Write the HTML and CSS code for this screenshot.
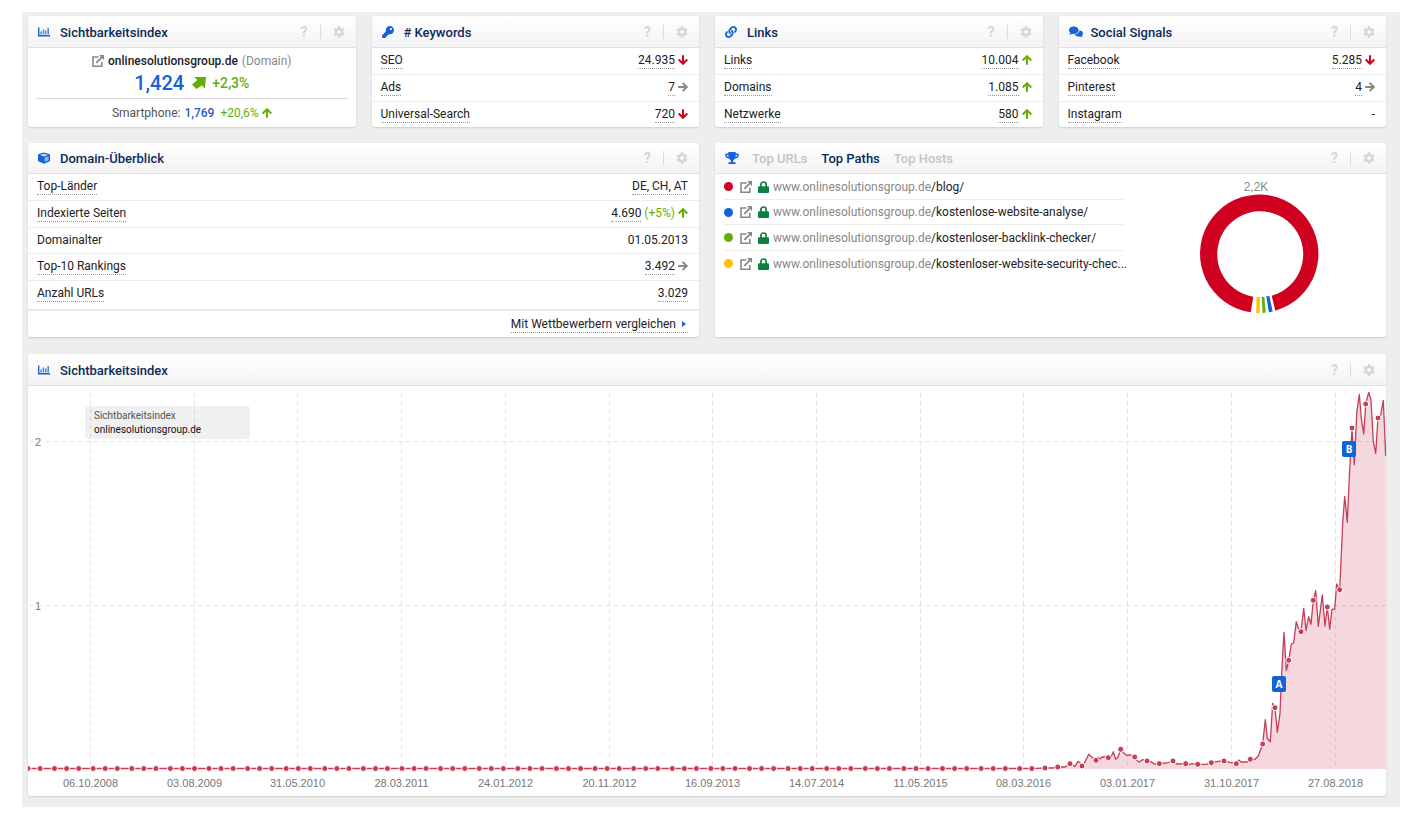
FILE: index.html
```html
<!DOCTYPE html>
<html lang="de">
<head>
<meta charset="utf-8">
<title>Sichtbarkeitsindex – onlinesolutionsgroup.de</title>
<link rel="stylesheet" href="styles.css">
</head>
<body>
<svg class="sprite" aria-hidden="true">
  <symbol id="i-chart" viewBox="0 0 12 10"><path d="M.7.5V8.800H12" fill="none" stroke="currentColor" stroke-width="1.4"/><path d="M2.300 7.500V4.500h1.500v3zM4.700 7.500V2.500h1.500v5zM7 7.500V3.500h1.500v4zM9.400 7.500V1H11v6.500z" opacity=".75"/></symbol>
  <symbol id="i-key" viewBox="0 0 512 512"><path d="M512 176.001C512 273.203 433.202 352 336 352c-11.220 0-22.190-1.062-32.827-3.069l-24.012 27.014A23.999 23.999 0 0 1 261.223 384H224v40c0 13.255-10.745 24-24 24h-40v40c0 13.255-10.745 24-24 24H24c-13.255 0-24-10.745-24-24v-78.059c0-6.365 2.529-12.470 7.029-16.971l161.802-161.802C163.108 213.814 160 195.271 160 176 160 78.798 238.797.001 335.999 0 433.488-.001 512 78.511 512 176.001zM336 128c0 26.510 21.490 48 48 48s48-21.490 48-48-21.490-48-48-48-48 21.490-48 48z"/></symbol>
  <symbol id="i-link" viewBox="0 0 512 512"><path d="M326.612 185.391c59.747 59.809 58.927 155.698.36 214.590-.11.12-.24.25-.36.37l-67.200 67.200c-59.270 59.270-155.699 59.262-214.960 0-59.270-59.260-59.270-155.700 0-214.960l37.106-37.106c9.840-9.840 26.786-3.300 27.294 10.606.648 17.722 3.826 35.527 9.690 52.721 1.986 5.822.567 12.262-3.783 16.612l-13.087 13.087c-28.026 28.026-28.905 73.660-1.155 101.960 28.024 28.579 74.086 28.749 102.325.51l67.200-67.190c28.191-28.191 28.073-73.757 0-101.830-3.701-3.694-7.429-6.564-10.341-8.569a16.037 16.037 0 0 1-6.947-12.606c-.396-10.567 3.348-21.456 11.698-29.806l21.054-21.055c5.521-5.521 14.182-6.199 20.584-1.731a152.482 152.482 0 0 1 20.522 17.197zM467.547 44.449c-59.261-59.262-155.690-59.270-214.960 0l-67.200 67.200c-.12.12-.25.25-.36.37-58.566 58.892-59.387 154.781.36 214.590a152.454 152.454 0 0 0 20.521 17.196c6.402 4.468 15.064 3.789 20.584-1.731l21.054-21.055c8.350-8.350 12.094-19.239 11.698-29.806a16.037 16.037 0 0 0-6.947-12.606c-2.912-2.005-6.640-4.875-10.341-8.569-28.073-28.073-28.191-73.639 0-101.830l67.200-67.190c28.239-28.239 74.300-28.069 102.325.51 27.750 28.300 26.872 73.934-1.155 101.960l-13.087 13.087c-4.350 4.350-5.769 10.790-3.783 16.612 5.864 17.194 9.042 34.999 9.690 52.721.509 13.906 17.454 20.446 27.294 10.606l37.106-37.106c59.271-59.259 59.271-155.699.001-214.959z"/></symbol>
  <symbol id="i-comments" viewBox="0 0 14 12"><path d="M4.800.5C7.500.5 9.600 2.100 9.600 4.200S7.500 7.900 4.800 7.900c-.6 0-1.100-.1-1.600-.2C2.400 8.300 1.400 8.700.2 8.700c.5-.5 1-1.200 1.200-1.900C.5 6.100 0 5.200 0 4.200 0 2.100 2.100.5 4.800.5z"/><path d="M10.500 4.300c2 .3 3.500 1.600 3.500 3.200 0 .8-.4 1.600-1.100 2.200.2.600.6 1.100 1 1.500-1 0-1.900-.3-2.600-.8-.4.1-.8.2-1.300.2-1.900 0-3.500-.9-4.200-2.100 2.700-.2 4.700-2 4.700-4.200z"/></symbol>
  <symbol id="i-cube" viewBox="0 0 12 12"><path d="M6 .4l5.200 1.500q.8.300.8 1.100v5.600q0 .7-.7 1L6 11.800.700 9.600q-.7-.3-.7-1V3q0-.8.8-1.100z"/><path d="M2 3l4-1.300L10 3 6 4.400z" fill="#fff" opacity=".8"/><path d="M6.700 5.600l3.900-1.400v4l-3.900 1.900z" fill="#fff" opacity=".55"/></symbol>
  <symbol id="i-trophy" viewBox="0 0 576 512"><path d="M552 64H448V24c0-13.300-10.700-24-24-24H152c-13.300 0-24 10.700-24 24v40H24C10.700 64 0 74.700 0 88v56c0 35.700 22.500 72.400 61.900 100.700 31.500 22.700 69.800 37.100 110 41.700C203.300 338.500 240 360 240 360v72h-48c-35.300 0-64 20.700-64 56v12c0 6.600 5.400 12 12 12h296c6.600 0 12-5.400 12-12v-12c0-35.300-28.700-56-64-56h-48v-72s36.700-21.500 68.100-73.600c40.300-4.600 78.600-19 110-41.700 39.300-28.300 61.900-65 61.900-100.700V88c0-13.300-10.700-24-24-24zM99.300 192.800C74.900 175.200 64 155.600 64 144v-16h64.200c1 32.600 5.800 61.200 12.800 86.200-15.100-5.200-29.200-12.400-41.700-21.400zM512 144c0 16.100-17.700 36.100-35.300 48.800-12.500 9-26.700 16.200-41.800 21.400 7-25 11.800-53.600 12.800-86.200H512v16z"/></symbol>
  <symbol id="i-gear" viewBox="0 0 12 12"><circle cx="6" cy="6" r="3.100" fill="none" stroke="currentColor" stroke-width="2.300"/><path d="M6 .3v2M6 9.700v2M1.060 3.150l1.750 1M9.200 7.850l1.750 1M1.060 8.850l1.750-1M9.200 4.150l1.750-1" stroke="currentColor" stroke-width="2.700"/></symbol>
  <symbol id="i-up" viewBox="0 0 10 10"><path d="M5 9.800V1.500M.7 5.500L5 1.200l4.300 4.300" fill="none" stroke="currentColor" stroke-width="2"/></symbol>
  <symbol id="i-down" viewBox="0 0 10 10"><path d="M5 .2v8.300M.7 4.500L5 8.800l4.300-4.300" fill="none" stroke="currentColor" stroke-width="2"/></symbol>
  <symbol id="i-right" viewBox="0 0 10 10"><path d="M.1 5h8.500M4.600.8L8.800 5 4.600 9.200" fill="none" stroke="currentColor" stroke-width="1.900"/></symbol>
  <symbol id="i-rise" viewBox="0 0 14 12"><path d="M2.300 0H14l-1.100 11.400-3-2.800L4.300 12 0 7.500l5.300-4.400z"/></symbol>
  <symbol id="i-ext" viewBox="0 0 12 12"><path d="M6.500 2H1v9.200h8.800V7" fill="none" stroke="currentColor" stroke-width="1.600"/><path d="M4.300 7.800L10 2.100" stroke="currentColor" stroke-width="1.800"/><path d="M7 0h5v5z"/></symbol>
  <symbol id="i-lock" viewBox="0 0 11 12"><path d="M2.900 6V3.600a2.600 2.600 0 0 1 5.200 0V6" fill="none" stroke="currentColor" stroke-width="1.700"/><rect y="5.200" width="11" height="6.800" rx="1"/></symbol>
</svg>

<main class="dashboard">
  <section class="card">
    <header class="card-head">
      <svg class="head-icon"><use href="#i-chart"/></svg><h2>Sichtbarkeitsindex</h2>
      <div class="tools"><button type="button" aria-label="Hilfe">?</button><button type="button" class="gear" aria-label="Einstellungen"><svg><use href="#i-gear"/></svg></button></div>
    </header>
    <div class="summary">
      <p class="domain"><svg class="ext"><use href="#i-ext"/></svg><strong>onlinesolutionsgroup.de</strong><span>(Domain)</span></p>
      <p class="score"><strong>1,424</strong><svg><use href="#i-rise"/></svg><span>+2,3%</span></p>
      <p class="mobile"><span>Smartphone:</span><strong>1,769</strong><span class="green plus">+20,6%</span><svg class="trend green"><use href="#i-up"/></svg></p>
    </div>
  </section>

  <section class="card">
    <header class="card-head">
      <svg class="head-icon"><use href="#i-key"/></svg><h2># Keywords</h2>
      <div class="tools"><button type="button" aria-label="Hilfe">?</button><button type="button" class="gear" aria-label="Einstellungen"><svg><use href="#i-gear"/></svg></button></div>
    </header>
    <table class="stats">
      <tr><th scope="row"><span class="dotted">SEO</span></th><td><span class="dotted">24.935</span><svg class="trend red"><use href="#i-down"/></svg></td></tr>
      <tr><th scope="row"><span class="dotted">Ads</span></th><td><span class="dotted">7</span><svg class="trend grey"><use href="#i-right"/></svg></td></tr>
      <tr><th scope="row"><span class="dotted">Universal-Search</span></th><td><span class="dotted">720</span><svg class="trend red"><use href="#i-down"/></svg></td></tr>
    </table>
  </section>

  <section class="card">
    <header class="card-head">
      <svg class="head-icon"><use href="#i-link"/></svg><h2>Links</h2>
      <div class="tools"><button type="button" aria-label="Hilfe">?</button><button type="button" class="gear" aria-label="Einstellungen"><svg><use href="#i-gear"/></svg></button></div>
    </header>
    <table class="stats">
      <tr><th scope="row"><span class="dotted">Links</span></th><td><span class="dotted">10.004</span><svg class="trend green"><use href="#i-up"/></svg></td></tr>
      <tr><th scope="row"><span class="dotted">Domains</span></th><td><span class="dotted">1.085</span><svg class="trend green"><use href="#i-up"/></svg></td></tr>
      <tr><th scope="row"><span class="dotted">Netzwerke</span></th><td><span class="dotted">580</span><svg class="trend green"><use href="#i-up"/></svg></td></tr>
    </table>
  </section>

  <section class="card">
    <header class="card-head">
      <svg class="head-icon wide"><use href="#i-comments"/></svg><h2>Social Signals</h2>
      <div class="tools"><button type="button" aria-label="Hilfe">?</button><button type="button" class="gear" aria-label="Einstellungen"><svg><use href="#i-gear"/></svg></button></div>
    </header>
    <table class="stats">
      <tr><th scope="row"><span class="dotted">Facebook</span></th><td><span class="dotted">5.285</span><svg class="trend red"><use href="#i-down"/></svg></td></tr>
      <tr><th scope="row"><span class="dotted">Pinterest</span></th><td><span class="dotted">4</span><svg class="trend grey"><use href="#i-right"/></svg></td></tr>
      <tr><th scope="row"><span class="dotted">Instagram</span></th><td>-</td></tr>
    </table>
  </section>

  <section class="card half">
    <header class="card-head slim">
      <svg class="head-icon"><use href="#i-cube"/></svg><h2>Domain-Überblick</h2>
      <div class="tools"><button type="button" aria-label="Hilfe">?</button><button type="button" class="gear" aria-label="Einstellungen"><svg><use href="#i-gear"/></svg></button></div>
    </header>
    <table class="stats">
      <tr><th scope="row"><span class="dotted">Top-Länder</span></th><td><span class="dotted">DE, CH, AT</span></td></tr>
      <tr><th scope="row"><span class="dotted">Indexierte Seiten</span></th><td><span class="dotted">4.690</span> <span class="green">(+5%)</span><svg class="trend green"><use href="#i-up"/></svg></td></tr>
      <tr><th scope="row">Domainalter</th><td>01.05.2013</td></tr>
      <tr><th scope="row"><span class="dotted">Top-10 Rankings</span></th><td><span class="dotted">3.492</span><svg class="trend grey"><use href="#i-right"/></svg></td></tr>
      <tr><th scope="row"><span class="dotted">Anzahl URLs</span></th><td><span class="dotted">3.029</span></td></tr>
    </table>
    <footer class="card-foot"><a class="dotted" href="#">Mit Wettbewerbern vergleichen<svg class="caret" viewBox="0 0 4 6"><path d="M0 0l4 3-4 3z"/></svg></a></footer>
  </section>

  <section class="card half">
    <header class="card-head slim">
      <svg class="head-icon wide"><use href="#i-trophy"/></svg>
      <nav class="tabs"><button type="button">Top URLs</button><button type="button" class="active">Top Paths</button><button type="button">Top Hosts</button></nav>
      <div class="tools"><button type="button" aria-label="Hilfe">?</button><button type="button" class="gear" aria-label="Einstellungen"><svg><use href="#i-gear"/></svg></button></div>
    </header>
    <div class="paths">
      <ul>
        <li><i class="dot c-red"></i><svg class="ext"><use href="#i-ext"/></svg><svg class="lock"><use href="#i-lock"/></svg><a href="#">www.onlinesolutionsgroup.de<b>/blog/</b></a></li>
        <li><i class="dot c-blue"></i><svg class="ext"><use href="#i-ext"/></svg><svg class="lock"><use href="#i-lock"/></svg><a href="#">www.onlinesolutionsgroup.de<b>/kostenlose-website-analyse/</b></a></li>
        <li><i class="dot c-green"></i><svg class="ext"><use href="#i-ext"/></svg><svg class="lock"><use href="#i-lock"/></svg><a href="#">www.onlinesolutionsgroup.de<b>/kostenloser-backlink-checker/</b></a></li>
        <li><i class="dot c-yellow"></i><svg class="ext"><use href="#i-ext"/></svg><svg class="lock"><use href="#i-lock"/></svg><a href="#">www.onlinesolutionsgroup.de<b>/kostenloser-website-security-chec...</b></a></li>
      </ul>
      <svg class="donut" viewBox="0 0 120 142" role="img" aria-label="Verteilung der Pfade">
        <text x="56" y="17" text-anchor="middle">2,2K</text>
        <path fill="#cf0020" d="M50.700 138.300A59.200 59.200 0 1 1 75.300 136.700L71.700 121.700A43 43 0 1 0 53.300 122.700z"/>
        <path fill="#1064d6" d="M66.300 122.300l3-.4 3.400 15.700-3.800.7z"/>
        <path fill="#62b000" d="M61.600 122.900l2.700-.1 1.400 15.800-3.100.3z"/>
        <path fill="#ffbe0a" d="M56.600 123h3.300l-.2 16h-3.500z"/>
      </svg>
    </div>
  </section>

  <section class="card full">
    <header class="card-head">
      <svg class="head-icon"><use href="#i-chart"/></svg><h2>Sichtbarkeitsindex</h2>
      <div class="tools"><button type="button" aria-label="Hilfe">?</button><button type="button" class="gear" aria-label="Einstellungen"><svg><use href="#i-gear"/></svg></button></div>
    </header>
    <svg class="chart" id="chart" viewBox="0 0 1358 410" role="img" aria-label="Verlauf des Sichtbarkeitsindex"></svg>
  </section>
</main>
<script src="chart.js"></script>
</body>
</html>
```
FILE: styles.css
```css
* { box-sizing: border-box; }

body {
  margin: 12px 12px 19px 22px;
  background: #fff;
  color: #222;
  font: 12px/16px Roboto, "Liberation Sans", sans-serif;
}

h2, p, ul { margin: 0; padding: 0; }
ul { list-style: none; }
a { color: inherit; text-decoration: none; }
svg { fill: currentColor; flex: none; }
button { border: 0; padding: 0; background: none; font: inherit; color: inherit; cursor: pointer; }
.sprite { display: none; }

.dashboard {
  display: grid;
  grid-template-columns: repeat(4, minmax(0, 1fr));
  gap: 16px;
  padding: 4px 14px 11px 6px;
  background: #eee;
}

.card {
  display: flex;
  flex-direction: column;
  background: #fff;
  border-radius: 3px;
  box-shadow: 0 1px 2px rgba(0, 0, 0, .14);
  overflow: hidden;
}
.half { grid-column: span 2; }
.full { grid-column: 1 / -1; margin-top: 1px; }

.card-head {
  display: flex;
  align-items: center;
  height: 32px;
  padding: 0 11px 0 10px;
  border-bottom: 1px solid #e0e0e0;
  background: linear-gradient(#fff, #f3f3f3);
}
.card-head.slim { height: 31px; }
.head-icon { width: 12px; height: 12px; margin-right: 10px; color: #1463d8; }
.head-icon.wide { width: 14px; margin-right: 8px; }
h2, .tabs { padding-top: 2px; font-size: 13px; font-weight: 500; line-height: 16px; color: #0b2a5b; }
.tabs { display: flex; gap: 14px; padding-left: 5px; }
.tabs button { color: #c4c4c4; }
.tabs .active { color: #0b2a5b; }

.tools { display: flex; align-items: center; margin-left: auto; color: #d6d6d6; font-size: 14px; font-weight: 700; }
.gear { display: flex; margin-left: 12px; padding-left: 12px; border-left: 1px solid #dcdcdc; }
.gear svg { width: 12px; height: 14px; }

.green { color: #62b000; }
.red { color: #d0021b; }
.grey { color: #888; }
.trend { width: 10px; height: 10px; margin-left: 3px; vertical-align: -1px; }

.dotted { display: inline-block; border-bottom: 1px dotted #999; line-height: 16px; }

.stats { width: 100%; border-collapse: collapse; }
.half .stats { margin-bottom: 3px; }
.stats tr { height: 26px; border-bottom: 1px solid #ececec; }
.stats tr:nth-child(even) { height: 27px; }
.stats tr:last-child { border-bottom: 0; }
.stats th { padding: 0 0 0 9px; text-align: left; font-weight: 400; }
.stats td { padding: 0 11px 0 0; text-align: right; }

.card-foot { margin-top: auto; padding: 5px 11px 4px; border-top: 2px solid #e8e8e8; text-align: right; }
.caret { width: 4px; height: 6px; margin: 0 2px 0 6px; vertical-align: 1px; color: #1463d8; }

.summary { display: flex; flex-direction: column; flex: 1; padding: 4px 8px 0; }
.summary p { display: flex; align-items: center; justify-content: center; }
.summary strong { font-weight: 500; }
.domain { line-height: 18px; gap: 4px; color: #888; }
.domain strong { color: #222; }
.ext { width: 12px; height: 12px; color: #888; }
.score { height: 29px; gap: 8px; padding-bottom: 2px; border-bottom: 1px solid #d8d8d8; color: #62b000; font-size: 14px; font-weight: 500; }
.score strong { color: #1463d8; font-size: 20px; }
.score svg { width: 14px; height: 12px; }
.score span { margin-left: -2px; }
.mobile { flex: 1; color: #555; }
.mobile strong { margin: 0 6px 0 4px; color: #1f5cc4; }

.paths { display: grid; grid-template-columns: minmax(0, 1fr) 263px; flex: 1; padding-left: 9px; }
.paths li { display: flex; align-items: center; height: 26px; border-bottom: 1px solid #ececec; white-space: nowrap; color: #888; }
.paths li:nth-child(even) { height: 25px; }
.paths li:last-child { border-bottom: 0; }
.paths b { font-weight: 400; color: #222; }
.dot { flex: none; width: 9px; height: 9px; border-radius: 50%; }
.c-red { background: #cf0020; }
.c-blue { background: #1064d6; }
.c-green { background: #62b000; }
.c-yellow { background: #ffbe0a; }
.paths .ext { margin: 0 6px 0 7px; }
.lock { width: 11px; height: 12px; margin-right: 4px; color: #0b8040; }
.donut { width: 120px; justify-self: center; margin-left: 10px; }
.donut text { font: 12px "Liberation Sans", sans-serif; fill: #888; }

.chart { display: block; width: 100%; }
.chart .grid { stroke: #e2e2e2; stroke-dasharray: 4 4; }
.chart .axis { font: 11px "Liberation Sans", sans-serif; fill: #777; }
.chart .halo { stroke: #fff; stroke-width: 4px; paint-order: stroke; }
.chart .area { fill: #c63d57; fill-opacity: .2; }
.chart .line { fill: none; stroke: #c63d57; stroke-width: 1.3px; stroke-linejoin: round; }
.chart .point { fill: #c63d57; stroke: #fff; stroke-width: 1px; }
.chart .legend { fill: #000; fill-opacity: .06; }
.chart .legend-title { font-size: 10px; fill: #555; }
.chart .legend-name { font-size: 10px; fill: #111; }
.chart .pin { fill: #1064d6; }
.chart .pin-text { font: 700 10px "Open Sans", sans-serif; fill: #fff; text-anchor: middle; }
```
FILE: chart.js
```js
// Chart coordinates of the weekly values; a third entry marks a monthly point.
const series = [
  [1008, 382.3], [1017, 382, 1], [1024, 382], [1029.7, 381, 1], [1037, 381], [1042, 377.7, 1], [1047, 380.3], [1049.7, 375.7],
  [1052, 376.7], [1054, 380, 1], [1056, 378], [1060.7, 368.3], [1064, 371.3], [1068, 374.3, 1], [1070, 371.3],
  [1072, 373], [1074.3, 370.7], [1075.7, 371.3], [1077.7, 370], [1080.3, 371.7, 1], [1083, 371.3], [1085.3, 365.7],
  [1087.7, 373.3], [1090, 371.3], [1092.7, 363.3, 1], [1095.3, 366.7], [1098.7, 369.3], [1102.7, 369],
  [1106.7, 371, 1], [1109.3, 374.7], [1111.3, 376], [1114.3, 373.7], [1119, 375, 1], [1123.7, 376], [1126, 378],
  [1131.3, 377.7, 1], [1138.7, 377], [1145, 375, 1], [1148.7, 378], [1157.7, 377.7, 1], [1160.3, 379],
  [1163.7, 377.7], [1169.7, 378.3, 1], [1178.7, 378.3], [1183.3, 376.7, 1], [1190.3, 375.3], [1196, 375, 1],
  [1202, 376.3], [1206, 376.7], [1208.3, 377.7, 1], [1210.7, 374], [1213.3, 376], [1219.3, 376], [1222.3, 373.3, 1],
  [1227, 373.3], [1230.3, 370], [1234.7, 358, 1], [1237.3, 333.7], [1239.3, 352.3], [1242.3, 355.7],
  [1244.7, 317.3], [1247, 321.7, 1], [1249.3, 346.3], [1252, 327.3], [1253.3, 294], [1256, 246.3], [1258.3, 284.7],
  [1260.7, 274.3, 1], [1263.3, 258.3], [1265.7, 256.7], [1268.3, 235.7], [1270.7, 243.3], [1273, 245.7, 1],
  [1275.7, 222.3], [1278, 244.3], [1280.7, 230.7], [1283, 238.3], [1285.3, 214.3, 1], [1287.7, 204.7],
  [1290.3, 240.3], [1294.3, 209], [1297, 240], [1299.3, 221, 1], [1301.7, 243], [1304, 223.3], [1306.7, 223],
  [1308.7, 198], [1311.7, 203.7, 1], [1314.7, 137.3], [1316.7, 110.3], [1319.3, 136.3], [1321.3, 90.7],
  [1324, 42, 1], [1326.3, 78.7], [1328.7, 27.3], [1331.3, 8.3], [1333.3, 32.3], [1335.7, 48], [1337.7, 18, 1],
  [1340.7, 6.3], [1343, 14], [1345.3, 55.7], [1347.7, 67.3], [1350, 32, 1], [1352.7, 29], [1355.3, 14.3], [1357.7, 70]
];
const dates = ["06.10.2008", "03.08.2009", "31.05.2010", "28.03.2011", "24.01.2012", "20.11.2012", "16.09.2013",
  "14.07.2014", "11.05.2015", "08.03.2016", "03.01.2017", "31.10.2017", "27.08.2018"];
const BASE = 382.5;
const WEEK = 2.413;

// The index stays at zero until 2016.
const flat = [];
for (let i = 0; i <= 78; i++) flat.push([Math.round(i * 16 / 3) * WEEK, BASE, 1]);

const points = flat.concat(series);
const line = points.map(([x, y]) => x.toFixed(1) + "," + y).join(" ");
let svg = "";

dates.forEach((date, i) => {
  const x = Math.round(62 + i * 103.72) + 0.5;
  svg += `<line class="grid" x1="${x}" x2="${x}" y1="7" y2="382"/>`;
  svg += `<text class="axis" x="${x}" y="401" text-anchor="middle">${date}</text>`;
});
[[55.5, 2], [219.5, 1]].forEach(([y, label]) => {
  svg += `<line class="grid" x1="2" x2="1358" y1="${y}" y2="${y}"/>`;
  svg += `<text class="axis halo" x="7" y="${y + 4}">${label}</text>`;
});

svg += `<rect class="legend" x="57" y="20" width="165" height="33" rx="3"/>
  <text class="legend-title" x="66" y="33">Sichtbarkeitsindex</text>
  <text class="legend-name" x="66" y="47">onlinesolutionsgroup.de</text>
  <polygon class="area" points="0,383 ${line} 1358,383"/>
  <polyline class="line" points="${line}"/>`;
points.filter(p => p[2]).forEach(([x, y]) => {
  svg += `<circle class="point" cx="${x.toFixed(1)}" cy="${y}" r="3"/>`;
});
[[1244, 290, "A"], [1314, 55, "B"]].forEach(([x, y, name]) => {
  svg += `<rect class="pin" x="${x}" y="${y}" width="14" height="16" rx="2"/>
    <text class="pin-text" x="${x + 7}" y="${y + 12}">${name}</text>`;
});

document.getElementById("chart").innerHTML = svg;
```
